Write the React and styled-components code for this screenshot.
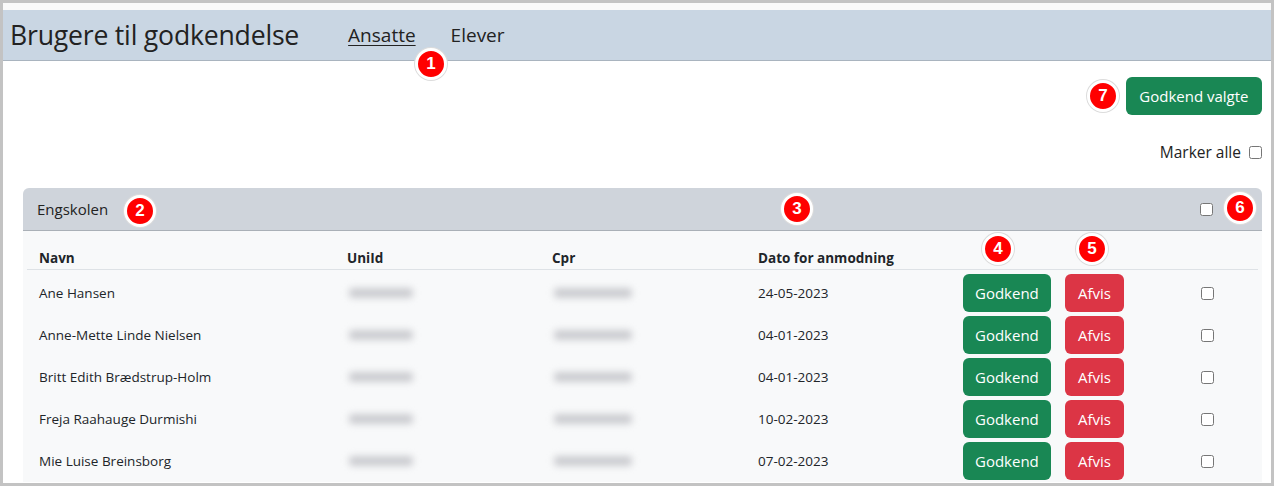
import React from "react";
import styled, { createGlobalStyle } from "styled-components";

const Global = createGlobalStyle`
  html, body { margin: 0; padding: 0; background: #c3c3c3; }
  body { font-family: "Open Sans", "Noto Sans", sans-serif; color: #212529; }
  * { box-sizing: border-box; }
`;

const Frame = styled.div`
  position: relative;
  margin: 3px;
  width: 1268px;
  height: 480px;
  overflow: hidden;
  background: #f9f9f9;
  padding-top: 7px;
`;

const Header = styled.header`
  display: flex;
  align-items: center;
  height: 51px;
  padding-left: 7px;
  background: #c9d6e3;
  border-bottom: 1px solid #a9b4bf;
`;

const Title = styled.h1`
  margin: 0 49px 0 0;
  font-size: 26.6px;
  font-weight: 400;
  letter-spacing: -0.2px;
  color: #222;
`;

const Tabs = styled.nav`
  display: flex;
  gap: 35px;
`;

const Tab = styled.a`
  font-size: 19px;
  color: #222;
  text-decoration: ${(p) => (p.$active ? "underline" : "none")};
  text-underline-offset: 3px;
  text-decoration-thickness: 1px;
`;

const Main = styled.main`
  background: #fff;
  height: 100%;
  padding: 16px 9px 0 20px;
`;

const Toolbar = styled.div`
  display: flex;
  justify-content: flex-end;
`;

const Button = styled.button`
  height: 38px;
  padding: 0 ${(p) => p.$px || 12}px;
  border: none;
  border-radius: 6px;
  font-family: inherit;
  font-size: 15px;
  color: #fff;
  background: ${(p) => (p.$variant === "danger" ? "#dc3545" : "#198754")};
  cursor: pointer;
`;

const MarkRow = styled.label`
  display: flex;
  justify-content: flex-end;
  align-items: center;
  gap: 8px;
  height: 24px;
  margin-top: 25px;
  font-size: 15.5px;
  color: #222;
`;

const Check = styled.input.attrs({ type: "checkbox" })`
  margin: 0;
  width: 13px;
  height: 13px;
`;

const Card = styled.section`
  margin-top: 24px;
  border-radius: 6px 6px 0 0;
  background: #f8f9fa;
  overflow: hidden;
`;

const CardHeader = styled.div`
  display: flex;
  align-items: center;
  justify-content: space-between;
  height: 43px;
  padding: 0 49px 0 14px;
  background: #cfd4db;
  border-bottom: 1px solid #aab0b7;
  font-size: 15px;
  color: #222;
`;

const CardBody = styled.div`
  padding: 0 4px;
`;

const Grid = styled.div`
  display: grid;
  grid-template-columns: 308px 205px 206px 205px 102px 136px 70px;
  align-items: center;
  height: ${(p) => (p.$head ? 39 : 42)}px;
  ${(p) =>
    p.$head
      ? `align-items: end; padding-bottom: 2px; border-bottom: 1px solid #dee2e6; margin-bottom: 2px; font-weight: 700;`
      : ""}
  font-size: 13.5px;
`;

const Cell = styled.div`
  padding-left: 12px;
  display: flex;
  align-items: center;
`;

const Blur = styled.span`
  display: inline-block;
  width: ${(p) => p.$w}px;
  height: 10px;
  margin-left: ${(p) => p.$ml || 0}px;
  border-radius: 4px;
  background: #cbccd0;
  filter: blur(3.5px);
`;

const Badge = styled.span`
  position: absolute;
  left: ${(p) => p.$x - 16}px;
  top: ${(p) => p.$y - 16}px;
  width: 32px;
  height: 32px;
  border-radius: 50%;
  background: #f00;
  border: 3px solid #fff;
  box-shadow: 0 0 0 1px #dcdcdc;
  display: flex;
  align-items: center;
  justify-content: center;
  color: #fff;
  font-family: "Liberation Sans", Arial, sans-serif;
  font-weight: 700;
  font-size: 17px;
`;

const rows = [
  ["Ane Hansen", "24-05-2023"],
  ["Anne-Mette Linde Nielsen", "04-01-2023"],
  ["Britt Edith Brædstrup-Holm", "04-01-2023"],
  ["Freja Raahauge Durmishi", "10-02-2023"],
  ["Mie Luise Breinsborg", "07-02-2023"],
];

export default function App() {
  return (
    <>
      <Global />
      <Frame>
        <Header>
          <Title>Brugere til godkendelse</Title>
          <Tabs>
            <Tab $active>Ansatte</Tab>
            <Tab>Elever</Tab>
          </Tabs>
        </Header>
        <Main>
          <Toolbar>
            <Button $px={13.5}>Godkend valgte</Button>
          </Toolbar>
          <MarkRow>
            Marker alle <Check />
          </MarkRow>
          <Card>
            <CardHeader>
              <span>Engskolen</span>
              <Check />
            </CardHeader>
            <CardBody>
              <Grid $head>
                <Cell>Navn</Cell>
                <Cell>UniId</Cell>
                <Cell>Cpr</Cell>
                <Cell>Dato for anmodning</Cell>
                <Cell />
                <Cell />
                <Cell />
              </Grid>
              {rows.map(([name, date]) => (
                <Grid key={name}>
                  <Cell>{name}</Cell>
                  <Cell>
                    <Blur $w={64} $ml={2} />
                  </Cell>
                  <Cell>
                    <Blur $w={78} $ml={2} />
                  </Cell>
                  <Cell>{date}</Cell>
                  <Cell>
                    <Button>Godkend</Button>
                  </Cell>
                  <Cell>
                    <Button $variant="danger" $px={13}>Afvis</Button>
                  </Cell>
                  <Cell>
                    <Check />
                  </Cell>
                </Grid>
              ))}
            </CardBody>
          </Card>
        </Main>
        <Badge $x={428} $y={61}>1</Badge>
        <Badge $x={1100} $y={93}>7</Badge>
        <Badge $x={137} $y={208}>2</Badge>
        <Badge $x={794} $y={206}>3</Badge>
        <Badge $x={995} $y={246}>4</Badge>
        <Badge $x={1089} $y={246}>5</Badge>
        <Badge $x={1237} $y={205}>6</Badge>
      </Frame>
    </>
  );
}
